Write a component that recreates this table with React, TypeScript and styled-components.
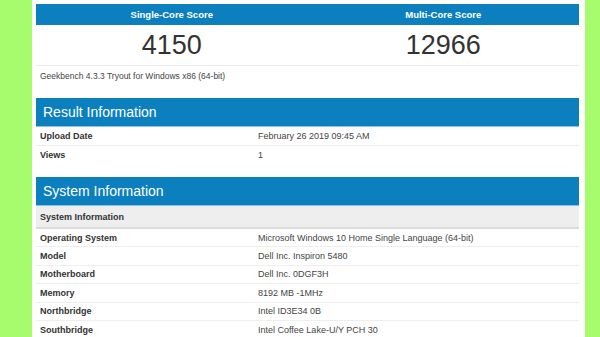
import styled, { createGlobalStyle } from 'styled-components';

const GlobalStyle = createGlobalStyle`
  html, body {
    margin: 0;
    padding: 0;
    background: #a6fc6c;
    font-family: "Liberation Sans", Arial, sans-serif;
  }
`;

const scores = [
  { label: 'Single-Core Score', value: '4150' },
  { label: 'Multi-Core Score', value: '12966' },
];

const resultRows = [
  ['Upload Date', 'February 26 2019 09:45 AM'],
  ['Views', '1'],
];

const systemRows = [
  ['Operating System', 'Microsoft Windows 10 Home Single Language (64-bit)'],
  ['Model', 'Dell Inc. Inspiron 5480'],
  ['Motherboard', 'Dell Inc. 0DGF3H'],
  ['Memory', '8192 MB -1MHz'],
  ['Northbridge', 'Intel ID3E34 0B'],
  ['Southbridge', 'Intel Coffee Lake-U/Y PCH 30'],
];

function App() {
  return (
    <Page>
      <GlobalStyle />
      <Panel>
        <ScoreGrid>
          {scores.map((s) => (
            <ScoreHead key={s.label}>{s.label}</ScoreHead>
          ))}
          {scores.map((s) => (
            <ScoreValue key={s.label}>{s.value}</ScoreValue>
          ))}
        </ScoreGrid>
        <Note>Geekbench 4.3.3 Tryout for Windows x86 (64-bit)</Note>

        <Section>
          <SectionTitle>Result Information</SectionTitle>
          {resultRows.map(([k, v], i) => (
            <Row key={k} $last={i === resultRows.length - 1}>
              <Label>{k}</Label>
              <Value>{v}</Value>
            </Row>
          ))}
        </Section>

        <Section>
          <SectionTitle>System Information</SectionTitle>
          <SubHead>System Information</SubHead>
          {systemRows.map(([k, v]) => (
            <Row key={k} $compact>
              <Label>{k}</Label>
              <Value>{v}</Value>
            </Row>
          ))}
        </Section>
      </Panel>
    </Page>
  );
}

export default App;

const Page = styled.div`
  width: 600px;
  height: 337px;
  overflow: hidden;
  display: flex;
`;

const Panel = styled.div`
  margin-left: 32px;
  width: 553px;
  box-sizing: border-box;
  padding: 4px 6px 0 4px;
  background: #fff;
  display: flex;
  flex-direction: column;
`;

const ScoreGrid = styled.div`
  display: grid;
  grid-template-columns: 1fr 1fr;
  grid-template-rows: 21px 40px;
  border-bottom: 1px solid #ececec;
`;

const ScoreHead = styled.div`
  background: #0c7fbf;
  color: #fff;
  font-weight: bold;
  font-size: 9.5px;
  display: flex;
  align-items: center;
  justify-content: center;
`;

const ScoreValue = styled.div`
  color: #333;
  font-size: 27px;
  display: flex;
  align-items: center;
  justify-content: center;
  padding-top: 1px;
`;

const Note = styled.div`
  height: 20px;
  line-height: 20px;
  padding-left: 4px;
  font-size: 8.5px;
  color: #444;
`;

const Section = styled.div`
  margin-top: 12px;
  display: flex;
  flex-direction: column;
`;

const SectionTitle = styled.div`
  height: 29px;
  line-height: 29px;
  padding-left: 7px;
  background: #0c7fbf;
  border-bottom: 1px solid #8cc3e3;
  box-sizing: border-box;
  color: #fff;
  font-size: 14px;
`;

const SubHead = styled.div`
  height: 23px;
  box-sizing: border-box;
  padding-left: 4px;
  display: flex;
  align-items: center;
  background: #eeeeee;
  border-bottom: 2px solid #dcdcdc;
  color: #333;
  font-weight: bold;
  font-size: 9px;
`;

const Row = styled.div<{ $last?: boolean; $compact?: boolean }>`
  display: grid;
  grid-template-columns: 218px 1fr;
  align-items: center;
  height: ${(p) => (p.$compact ? '18.4px' : '19px')};
  box-sizing: border-box;
  padding-left: 4px;
  border-bottom: 1px solid ${(p) => (p.$last ? 'transparent' : '#eeeeee')};
`;

const Label = styled.div`
  font-weight: bold;
  font-size: 9px;
  color: #333;
`;

const Value = styled.div`
  font-size: 9px;
  color: #444;
`;
